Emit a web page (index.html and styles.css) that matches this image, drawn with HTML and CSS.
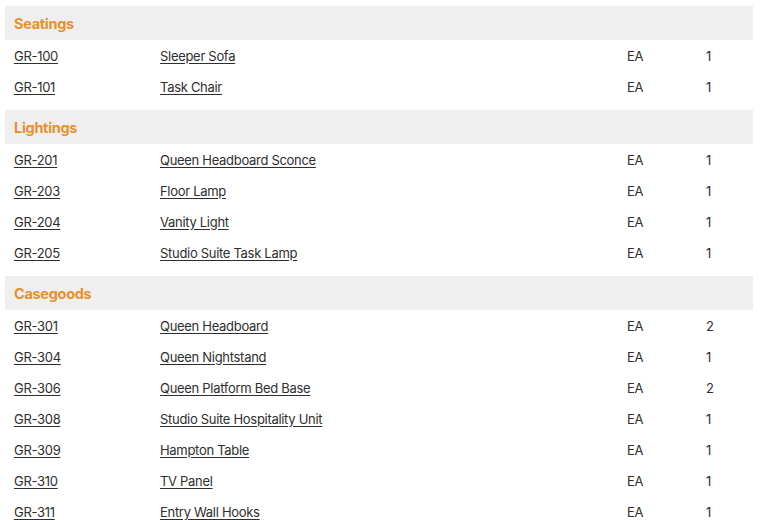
FILE: index.html
```html
<!DOCTYPE html>
<html>
<head>
<meta charset="utf-8">
<link rel="stylesheet" href="styles.css">
</head>
<body>
<div class="list">
  <section class="group">
    <div class="group-head">Seatings</div>
    <div class="row"><a class="code" href="#">GR-100</a><a class="desc" href="#">Sleeper Sofa</a><span class="unit">EA</span><span class="qty">1</span></div>
    <div class="row"><a class="code" href="#">GR-101</a><a class="desc" href="#">Task Chair</a><span class="unit">EA</span><span class="qty">1</span></div>
  </section>
  <section class="group">
    <div class="group-head">Lightings</div>
    <div class="row"><a class="code" href="#">GR-201</a><a class="desc" href="#">Queen Headboard Sconce</a><span class="unit">EA</span><span class="qty">1</span></div>
    <div class="row"><a class="code" href="#">GR-203</a><a class="desc" href="#">Floor Lamp</a><span class="unit">EA</span><span class="qty">1</span></div>
    <div class="row"><a class="code" href="#">GR-204</a><a class="desc" href="#">Vanity Light</a><span class="unit">EA</span><span class="qty">1</span></div>
    <div class="row"><a class="code" href="#">GR-205</a><a class="desc" href="#">Studio Suite Task Lamp</a><span class="unit">EA</span><span class="qty">1</span></div>
  </section>
  <section class="group">
    <div class="group-head">Casegoods</div>
    <div class="row"><a class="code" href="#">GR-301</a><a class="desc" href="#">Queen Headboard</a><span class="unit">EA</span><span class="qty">2</span></div>
    <div class="row"><a class="code" href="#">GR-304</a><a class="desc" href="#">Queen Nightstand</a><span class="unit">EA</span><span class="qty">1</span></div>
    <div class="row"><a class="code" href="#">GR-306</a><a class="desc" href="#">Queen Platform Bed Base</a><span class="unit">EA</span><span class="qty">2</span></div>
    <div class="row"><a class="code" href="#">GR-308</a><a class="desc" href="#">Studio Suite Hospitality Unit</a><span class="unit">EA</span><span class="qty">1</span></div>
    <div class="row"><a class="code" href="#">GR-309</a><a class="desc" href="#">Hampton Table</a><span class="unit">EA</span><span class="qty">1</span></div>
    <div class="row"><a class="code" href="#">GR-310</a><a class="desc" href="#">TV Panel</a><span class="unit">EA</span><span class="qty">1</span></div>
    <div class="row"><a class="code" href="#">GR-311</a><a class="desc" href="#">Entry Wall Hooks</a><span class="unit">EA</span><span class="qty">1</span></div>
  </section>
</div>
</body>
</html>
```

FILE: styles.css
```css
html, body {
  margin: 0;
  padding: 0;
  background: #ffffff;
}
body {
  font-family: Inter, "Open Sans", sans-serif;
  color: #2e2e2e;
  font-size: 13px;
  letter-spacing: -0.3px;
}
.list {
  padding: 6px 7px 0 5px;
  display: flex;
  flex-direction: column;
  gap: 8px;
}
.group-head {
  height: 34px;
  background: #efefef;
  color: #e8912c;
  font-weight: 700;
  font-size: 14.5px;
  letter-spacing: -0.3px;
  display: flex;
  align-items: center;
  padding-left: 9px;
}
.row {
  height: 31px;
  display: grid;
  grid-template-columns: 146px 467px 79px 1fr;
  align-items: center;
  padding-left: 9px;
}
.code, .desc {
  color: #2e2e2e;
  text-decoration: underline;
  text-underline-offset: 2px;
  justify-self: start;
}
```
